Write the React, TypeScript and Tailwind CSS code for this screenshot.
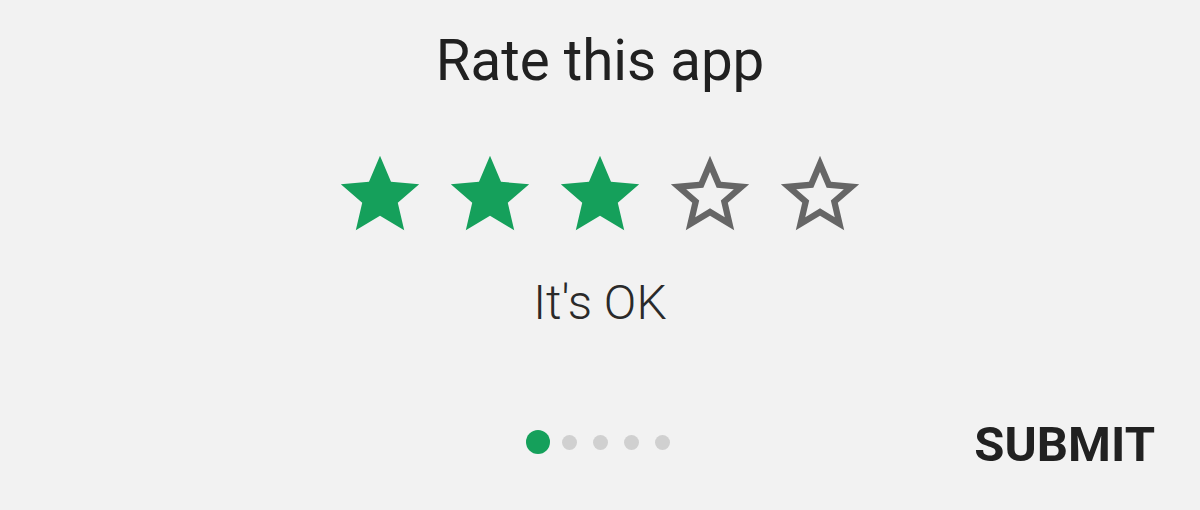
const STAR =
  'M12 17.27L18.18 21l-1.64-7.03L22 9.24l-7.19-.61L12 2 9.19 8.63 2 9.24l5.46 4.73L5.82 21z';
const STAR_BORDER =
  'M22 9.24l-7.19-.62L12 2 9.19 8.63 2 9.24l5.46 4.73L5.82 21 12 17.27 18.18 21l-1.63-7.03L22 9.24zM12 15.4l-3.76 2.27 1-4.28-3.32-2.88 4.38-.38L12 6.1l1.71 4.04 4.38.38-3.32 2.88 1 4.28L12 15.4z';

function Star({ filled }: { filled: boolean }) {
  return (
    <svg
      viewBox="0 0 24 24"
      className={`h-[94px] w-[94px] ${filled ? 'fill-[#15a05b]' : 'fill-[#666666]'}`}
    >
      <path d={filled ? STAR : STAR_BORDER} />
    </svg>
  );
}

export default function App() {
  const rating = 3;
  const pages = 5;
  const current = 0;

  return (
    <div className="flex h-[510px] w-full flex-col items-center bg-[#f2f2f2] font-['Roboto','Liberation_Sans',sans-serif]">
      <h1 className="mt-[33px] text-[56.5px] font-normal leading-none text-[#212121]">
        Rate this app
      </h1>

      <div className="mt-[58px] flex gap-4">
        {[1, 2, 3, 4, 5].map((n) => (
          <Star key={n} filled={n <= rating} />
        ))}
      </div>

      <p className="mt-[37px] text-[48px] font-light leading-none text-[#2a2a2a]">It&apos;s OK</p>

      <div className="mt-[93px] grid w-full grid-cols-[1fr_auto_1fr] items-center px-[45px]">
        <div />
        <div className="flex -translate-y-[2px] items-center">
          {Array.from({ length: pages }).map((_, i) => (
            <div key={i} className="flex w-[31px] justify-center">
              {i === current ? (
                <span className="h-[24px] w-[24px] rounded-full bg-[#15a05b]" />
              ) : (
                <span className="h-[15px] w-[15px] rounded-full bg-[#d0d0d0]" />
              )}
            </div>
          ))}
        </div>
        <button className="justify-self-end text-[49px] font-bold leading-none text-[#212121]">
          SUBMIT
        </button>
      </div>
    </div>
  );
}
